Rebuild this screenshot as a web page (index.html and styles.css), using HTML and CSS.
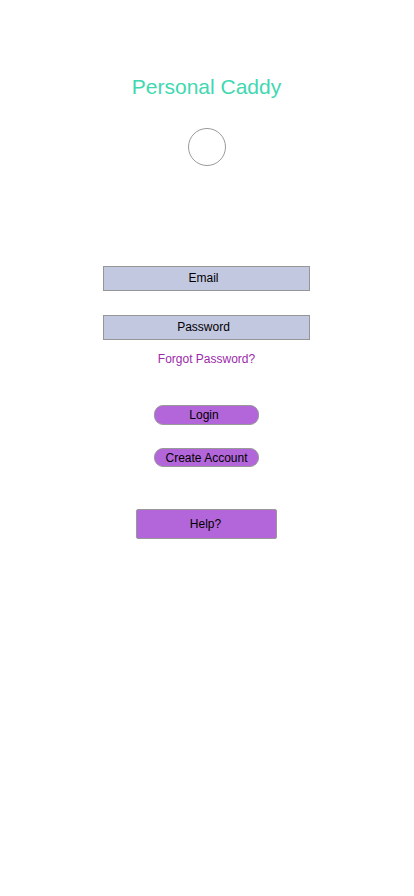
FILE: index.html
```html
<!DOCTYPE html>
<html lang="en">
<head>
<meta charset="utf-8">
<title>Personal Caddy</title>
<link rel="stylesheet" href="styles.css">
</head>
<body>
<main class="screen">
  <h1 class="title">Personal Caddy</h1>
  <div class="avatar"></div>
  <div class="field field-email">Email</div>
  <div class="field field-password">Password</div>
  <a class="forgot" href="#">Forgot Password?</a>
  <button class="pill pill-login">Login</button>
  <button class="pill pill-create">Create Account</button>
  <button class="help">Help?</button>
</main>
</body>
</html>
```
FILE: styles.css
```css
* { box-sizing: border-box; }
html, body { margin: 0; padding: 0; background: #fff; }
body { font-family: "Liberation Sans", Arial, sans-serif; color: #000; }

.screen {
  width: 413px;
  min-height: 896px;
  display: flex;
  flex-direction: column;
  align-items: center;
  padding-top: 75px;
}

.title {
  margin: 0;
  font-size: 21px;
  line-height: 24px;
  font-weight: normal;
  color: #3fd8b1;
}

.avatar {
  margin-top: 29px;
  width: 38px;
  height: 38px;
  border: 1px solid #9a9a9a;
  border-radius: 50%;
}

.field {
  width: 207px;
  height: 25px;
  border: 1px solid #969696;
  background: #c3c8e1;
  font-size: 12px;
  line-height: 23px;
  text-align: center;
  padding-right: 6px;
}
.field-email { margin-top: 100px; }
.field-password { margin-top: 24px; }

.forgot {
  margin-top: 11px;
  font-size: 12px;
  line-height: 16px;
  color: #9b2aa9;
  text-decoration: none;
}

.pill, .help {
  font-family: inherit;
  font-size: 12px;
  color: #000;
  background: #b366d9;
  border: 1px solid #999;
  padding: 0;
}
.pill {
  width: 105px;
  height: 20px;
  line-height: 18px;
  border-radius: 9px;
}
.pill-login { margin-top: 38px; padding-right: 5px; }
.pill-create { margin-top: 23px; height: 19px; }

.help {
  margin-top: 42px;
  width: 141px;
  height: 30px;
  border-radius: 2px;
  padding-right: 2px;
}
```
